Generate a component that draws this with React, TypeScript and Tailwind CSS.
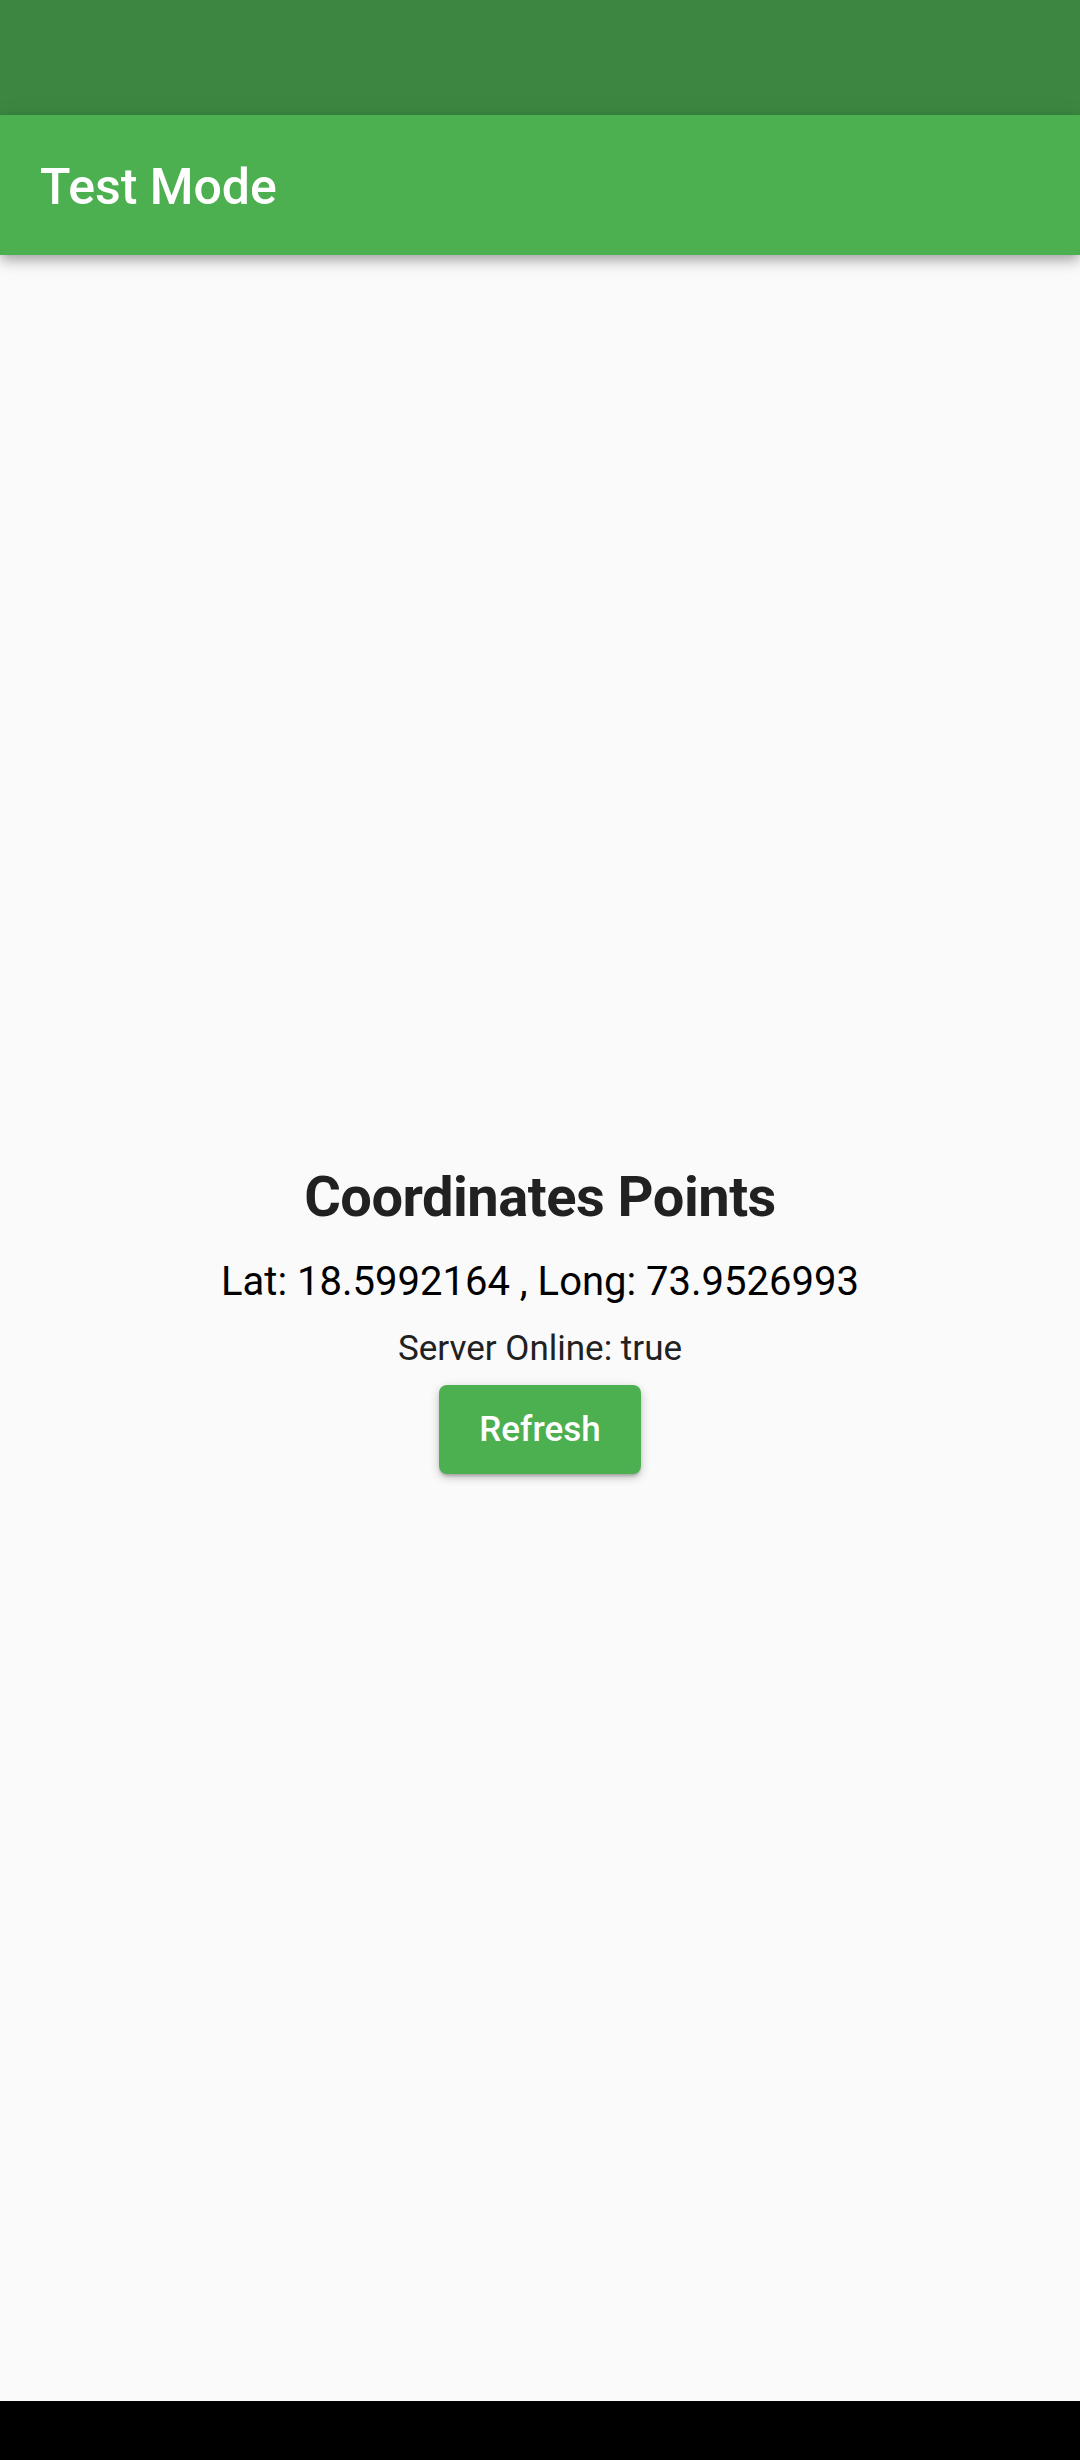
import React from "react";

export default function App() {
  return (
    <div
      className="w-[1080px] h-[2460px] flex flex-col bg-[#fafafa] overflow-hidden"
      style={{ fontFamily: "Roboto, 'Noto Sans', sans-serif" }}
    >
      <div className="h-[115px] shrink-0 bg-[#3b8741]" />
      <div className="relative z-10 h-[140px] shrink-0 bg-[#4caf50] flex items-center pl-[40px] pt-[4px] shadow-[0_5px_10px_-2px_rgba(0,0,0,0.2),0_8px_12px_rgba(0,0,0,0.12),0_2px_20px_rgba(0,0,0,0.1)]">
        <span className="text-white text-[50px] leading-[59px] font-medium">Test Mode</span>
      </div>
      <div className="flex-1 flex flex-col items-center justify-center">
        <div className="flex flex-col items-center mb-[6px]">
          <h1 className="text-[56px] leading-[70px] font-bold tracking-[-0.5px] text-[#212121]">Coordinates Points</h1>
          <p className="mt-[26px] text-[40px] leading-[47px] text-black">
            Lat: 18.5992164 , Long: 73.9526993
          </p>
          <p className="mt-[23px] text-[35px] leading-[41px] text-[#212121]">Server Online: true</p>
          <button className="mt-[16px] w-[202px] h-[89px] rounded-[8px] bg-[#4caf50] text-white text-[35px] leading-[41px] font-medium flex items-center justify-center shadow-[0_3px_3px_-1px_rgba(0,0,0,0.2),0_4px_8px_rgba(0,0,0,0.14),0_2px_12px_rgba(0,0,0,0.1)]">
            Refresh
          </button>
          <div className="h-[15px]" />
        </div>
      </div>
      <div className="h-[59px] shrink-0 bg-black" />
    </div>
  );
}
